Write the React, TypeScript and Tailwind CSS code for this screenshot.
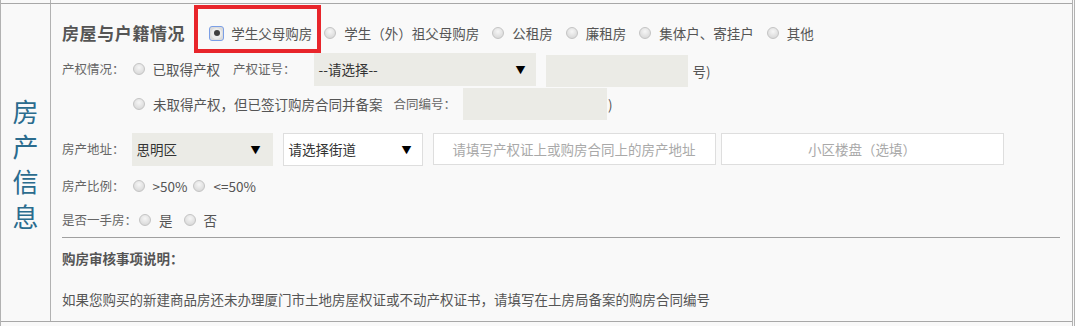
import React from 'react';

const Radio: React.FC<{ checked?: boolean; className?: string }> = ({ checked, className }) =>
    checked ? (
        <span className={`flex h-[15px] w-[15px] shrink-0 items-center justify-center rounded-[3px] border border-[#7b9fe6] bg-[#dcdcdc] ${className ?? ''}`}>
            <span className="flex h-[11px] w-[11px] items-center justify-center rounded-full bg-[#ececec]">
                <span className="h-[6px] w-[6px] rounded-full bg-[#3f3f3f]" />
            </span>
        </span>
    ) : (
        <span
            className={`h-[12px] w-[12px] shrink-0 rounded-full border border-[#c4c4c4] bg-[radial-gradient(circle_at_50%_35%,#f6f6f6,#d2d2d2)] ${className ?? ''}`}
        />
    );

const Option: React.FC<{ label: string; checked?: boolean; className?: string }> = ({ label, checked, className }) => (
    <span className={`flex items-center ${className ?? ''}`}>
        <Radio checked={checked} />
        <span className={`${checked ? 'ml-[7px]' : 'ml-[8px]'} text-[13.5px] text-[#555]`}>{label}</span>
    </span>
);

const Select: React.FC<{ text: string; className?: string }> = ({ text, className }) => (
    <div className={`flex h-[33px] items-center justify-between pl-[5px] pr-[10px] text-[13.5px] text-[#333] ${className ?? ''}`}>
        <span>{text}</span>
        <span className="text-[10px] text-black">▼</span>
    </div>
);

const Label: React.FC<{ text: string; className?: string }> = ({ text, className }) => (
    <span className={`text-[12.5px] text-[#666] ${className ?? ''}`}>{text}</span>
);

export default function App() {
    return (
        <div className="relative h-[326px] w-[1080px] overflow-hidden bg-white font-['Noto_Sans_CJK_SC',sans-serif]">
            <div className="w-[1075px] border-l border-r-[3px] border-double border-[#b2b2b2] bg-[#f9f9f9]">
                {/* tail of the previous row */}
                <div className="flex h-[3px]">
                    <div className="w-[50px] border-r border-[#b2b2b2]" />
                </div>

                <div className="flex h-[319px] border-y border-[#a8a8a8]">
                    <div className="flex w-[50px] items-center justify-center border-r border-[#b2b2b2]">
                        <div className="w-[26px] text-[26px] leading-[35px] text-[#2b6c8e]">房产信息</div>
                    </div>

                    <div className="flex-1 pl-[11px] pr-[12px]">
                        {/* 房屋与户籍情况 */}
                        <div className="flex h-[48px] items-center pt-[10px]">
                            <span className="text-[17px] font-bold tracking-[0.6px] text-[#555]">房屋与户籍情况</span>
                            <Option checked label="学生父母购房" className="ml-[24px]" />
                            <Option label="学生（外）祖父母购房" className="ml-[12px]" />
                            <Option label="公租房" className="ml-[13px]" />
                            <Option label="廉租房" className="ml-[13px]" />
                            <Option label="集体户、寄挂户" className="ml-[13px]" />
                            <Option label="其他" className="ml-[13px]" />
                        </div>

                        {/* 产权情况 */}
                        <div className="flex h-[34px] items-center">
                            <Label text="产权情况：" />
                            <Option label="已取得产权" className="ml-[8px]" />
                            <Label text="产权证号：" className="ml-[13px]" />
                            <Select text="--请选择--" className="ml-[18px] w-[222px] bg-[#ebebe6] pl-[4px]" />
                            <div className="ml-[10px] mt-[4px] h-[32px] w-[142px] bg-[#ebebe6]" />
                            <span className="ml-[5px] mt-[4px] text-[13.5px] text-[#555]">号)</span>
                        </div>

                        <div className="flex h-[36px] items-center">
                            <Option label="未取得产权，但已签订购房合同并备案" className="ml-[71px]" />
                            <Label text="合同编号：" className="ml-[11px]" />
                            <div className="ml-[7px] h-[32px] w-[144px] bg-[#ebebe6]" />
                            <span className="ml-[1px] text-[13.5px] text-[#555]">)</span>
                        </div>

                        {/* 房产地址 */}
                        <div className="flex h-[44px] items-center pt-[10px]">
                            <Label text="房产地址：" />
                            <Select text="思明区" className="ml-[7px] w-[141px] bg-[#ebebe6] pr-[12px]" />
                            <Select text="请选择街道" className="ml-[10px] w-[140px] border border-[#dedede] bg-white" />
                            <div className="ml-[10px] flex h-[32px] w-[283px] items-center justify-center border border-[#dedede] bg-white text-[13.5px] text-[#a9a9a9]">
                                请填写产权证上或购房合同上的房产地址
                            </div>
                            <div className="ml-[5px] flex h-[32px] w-[283px] items-center justify-center border border-[#dedede] bg-white text-[13.5px] text-[#a9a9a9]">
                                小区楼盘（选填）
                            </div>
                        </div>

                        <div className="flex h-[40px] items-center">
                            <Label text="房产比例：" />
                            <Option label=">50%" className="ml-[8px]" />
                            <Option label="<=50%" className="ml-[6px]" />
                        </div>

                        <div className="flex h-[28px] items-center">
                            <Label text="是否一手房：" />
                            <Option label="是" className="ml-[2px]" />
                            <Option label="否" className="ml-[11px]" />
                        </div>

                        <div className="mt-[3px] h-px bg-[#a0a0a0]" />

                        <div className="flex h-[40px] items-center">
                            <span className="text-[13.5px] font-bold text-[#555]">购房审核事项说明：</span>
                        </div>

                        <div className="flex h-[42px] items-center text-[13.5px] text-[#555]">
                            如果您购买的新建商品房还未办理厦门市土地房屋权证或不动产权证书，请填写在土房局备案的购房合同编号
                        </div>
                    </div>
                </div>

                <div className="flex h-[4px]">
                    <div className="w-[50px]" />
                </div>
            </div>

            {/* annotation box */}
            <div className="absolute left-[194px] top-[5px] h-[48px] w-[127px] border-[4px] border-[#e8252b]" />
        </div>
    );
}
